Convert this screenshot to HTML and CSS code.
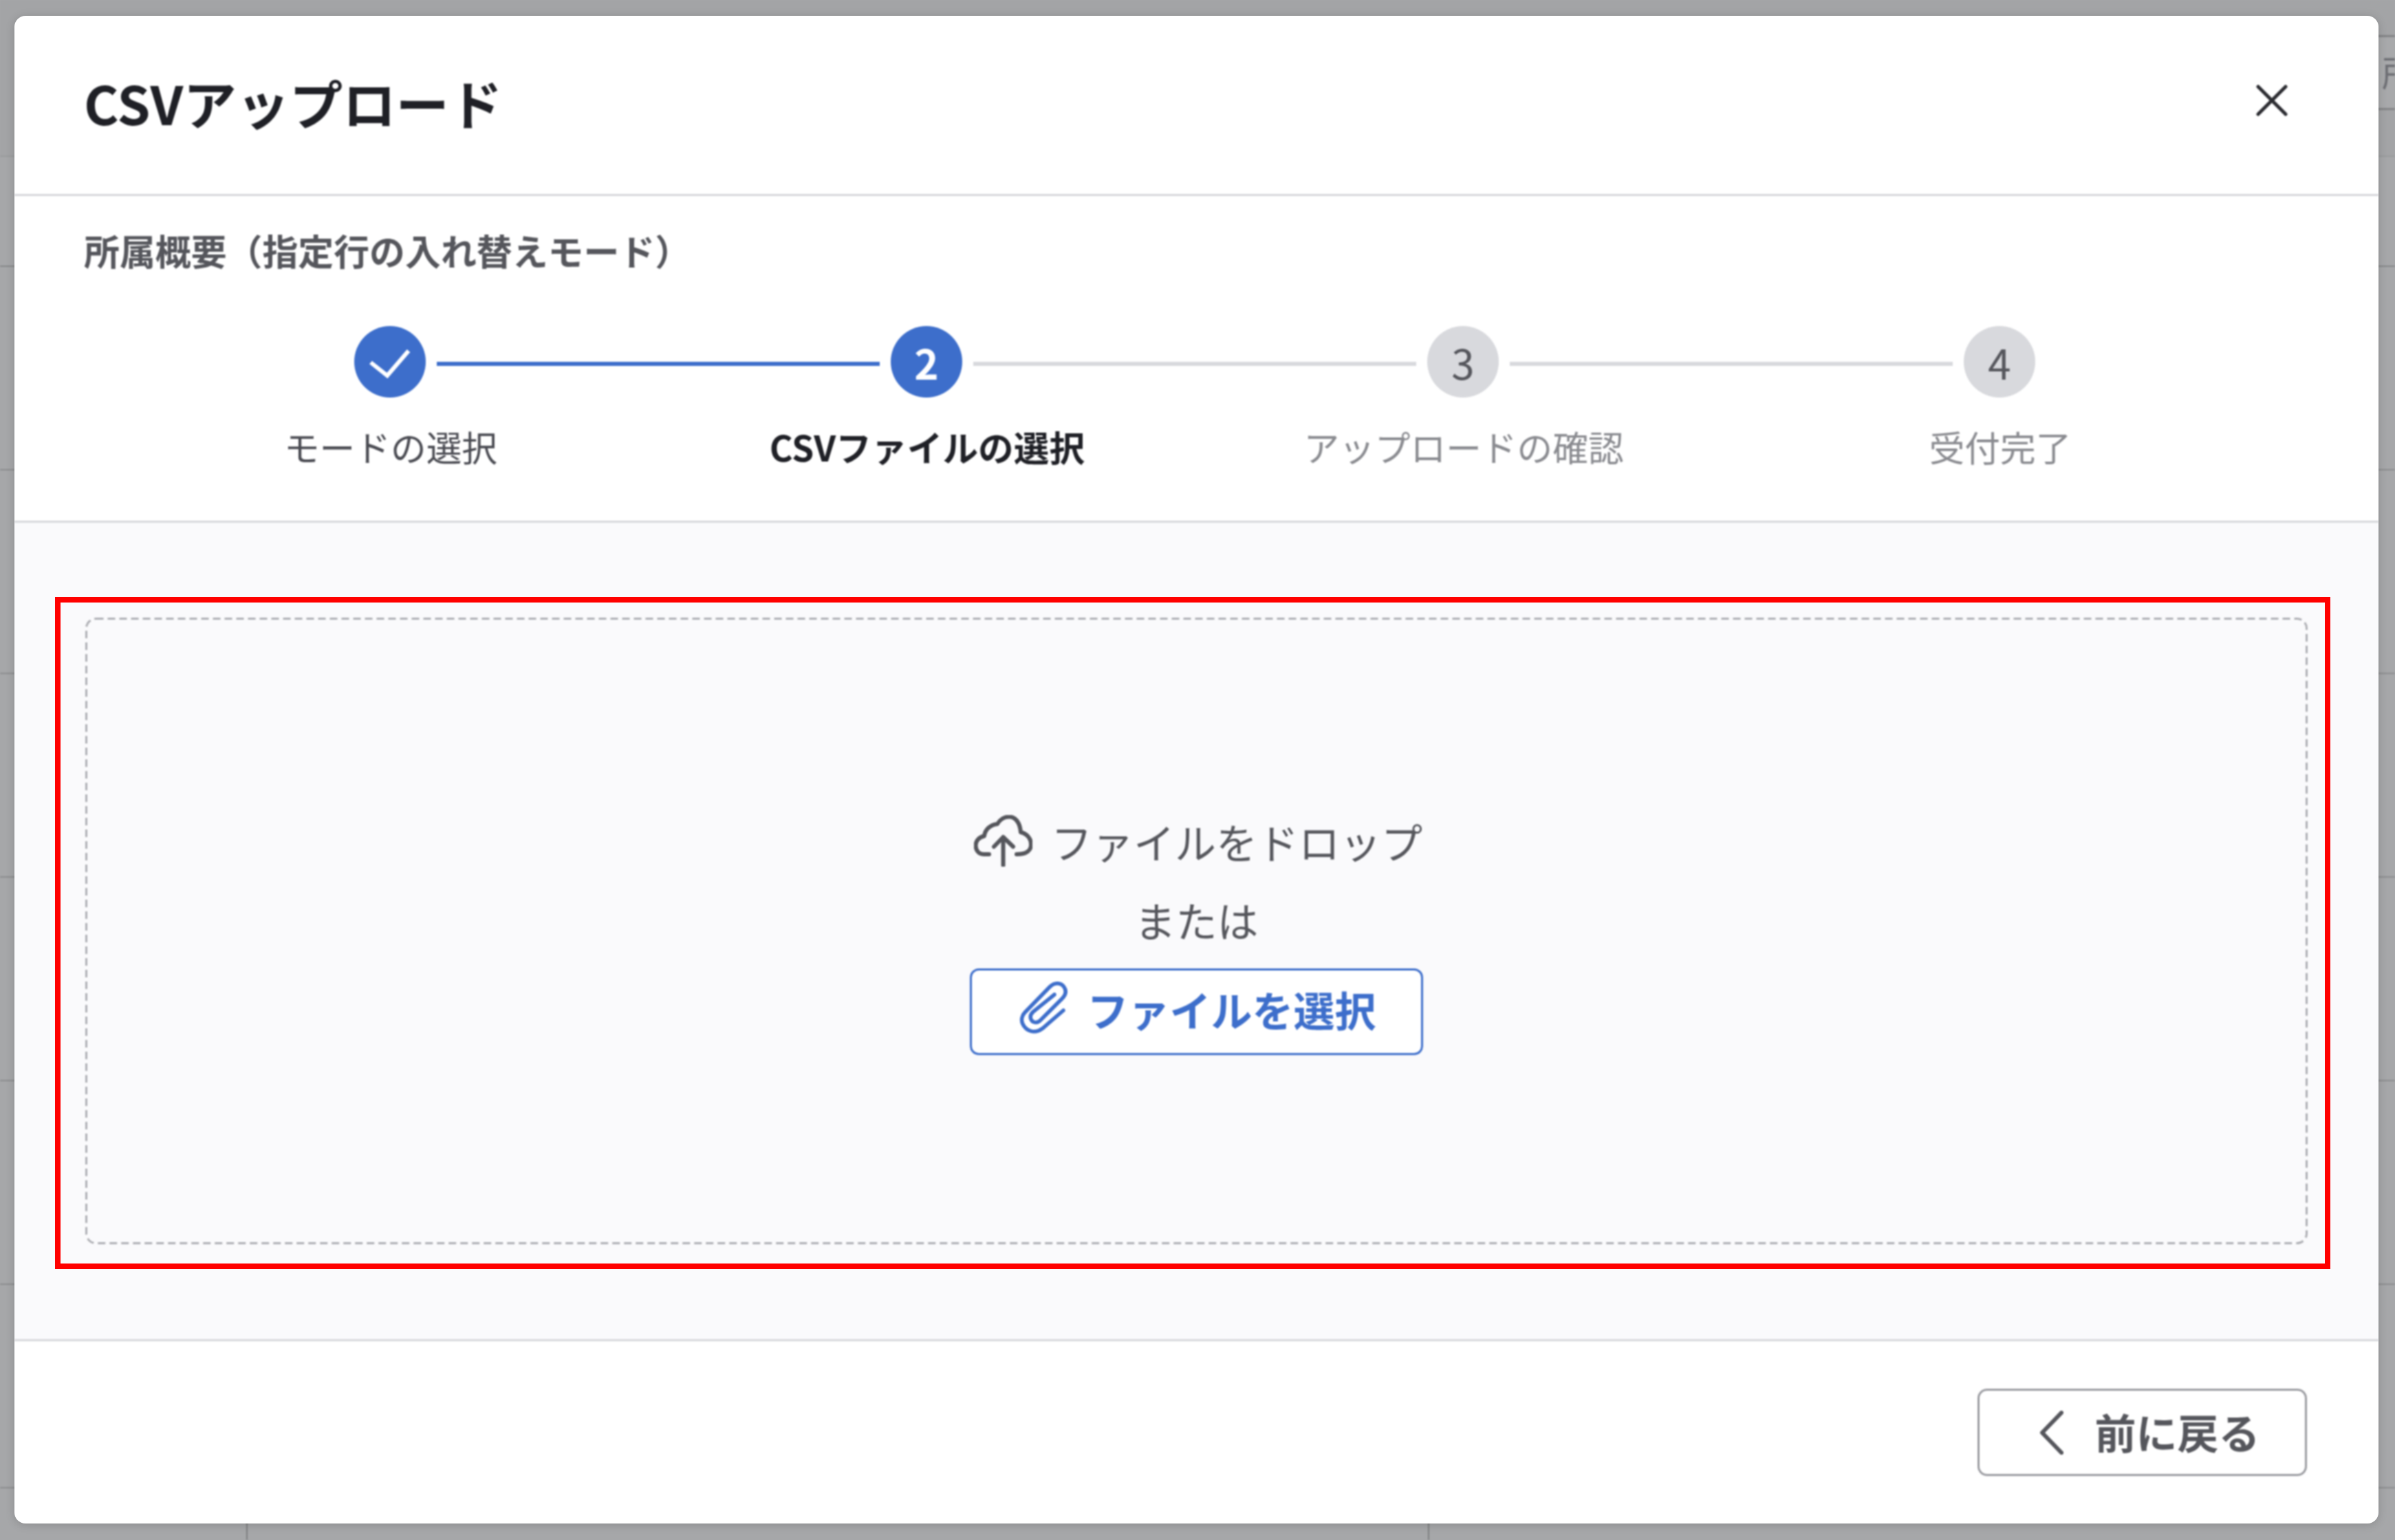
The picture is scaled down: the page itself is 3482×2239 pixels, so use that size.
FILE: index.html
```html
<!DOCTYPE html>
<html lang="ja">
  <head>
    <meta charset="utf-8">
    <title>CSVアップロード</title>
    <link rel="stylesheet" href="styles.css">
  </head>
  <body>
    <!-- table behind the dialog, only its edges show -->
    <div class="backdrop">
      <div class="bg-head">
        <div class="bg-head-cell">所属</div>
      </div>
      <div class="bg-first"></div>
      <div class="bg-row"></div>
      <div class="bg-row"></div>
      <div class="bg-row"></div>
      <div class="bg-row"></div>
      <div class="bg-row"></div>
      <div class="bg-row"></div>
      <div class="bg-last">
        <div class="bg-cell-a"></div>
        <div class="bg-cell-b"></div>
      </div>
    </div>

    <div class="modal">
      <div class="modal-header">
        <h1 class="modal-title">CSVアップロード</h1>
        <svg class="close-icon" width="46" height="46" viewBox="0 0 46 46">
          <path d="M3 3L43 43M43 3L3 43"/>
        </svg>
      </div>

      <div class="modal-steps">
        <p class="steps-caption">所属概要（指定行の入れ替えモード）</p>
        <div class="stepper">
          <div class="step done">
            <div class="step-top">
              <span class="line none"></span>
              <span class="circle">
                <svg width="104" height="104" viewBox="0 0 104 104">
                  <path d="M24 53L48 72L79 36"/>
                </svg>
              </span>
              <span class="line blue"></span>
            </div>
            <div class="step-label">モードの選択</div>
          </div>
          <div class="step current">
            <div class="step-top">
              <span class="line blue"></span>
              <span class="circle">2</span>
              <span class="line"></span>
            </div>
            <div class="step-label">CSVファイルの選択</div>
          </div>
          <div class="step">
            <div class="step-top">
              <span class="line"></span>
              <span class="circle">3</span>
              <span class="line"></span>
            </div>
            <div class="step-label">アップロードの確認</div>
          </div>
          <div class="step">
            <div class="step-top">
              <span class="line"></span>
              <span class="circle">4</span>
              <span class="line none"></span>
            </div>
            <div class="step-label">受付完了</div>
          </div>
        </div>
      </div>

      <div class="modal-body">
        <div class="red-frame">
          <div class="dropzone">
            <svg class="dash" width="3231" height="911" viewBox="0 0 3231 911">
              <rect x="1.5" y="1.5" width="3228" height="908" rx="14"/>
            </svg>
            <div class="drop-row">
              <svg class="cloud-icon" width="85" height="75" viewBox="0 0 85 75">
                <path d="M22 57H14C6 57 2.5 50 2.5 44C2.5 37 8 32 15 30.5C16 21 24 14 34 13C38 6 45 2.5 51 2.5C61 2.5 67 12 68 25C77 27 83 34 83 43C83 51 77 57 62 57"/>
                <path d="M42.5 73V32M29 46L42.5 32L57 46"/>
              </svg>
              <span>ファイルをドロップ</span>
            </div>
            <div class="drop-or">または</div>
            <button class="file-button">
              <svg class="clip-icon" width="110" height="110" viewBox="0 0 110 110">
                <path d="M75 53L45 79C33 88 21 83 16 73C13 67 15 60 19 56L55 19C62 12 71 12 76 19C80 25 78 31 73 36L41 68C36 72 30 71 28 66C26 62 28 58 31 55L62 30"/>
              </svg>
              <span class="file-button-text">ファイルを選択</span>
            </button>
          </div>
        </div>
      </div>

      <div class="modal-footer">
        <button class="back-button">
          <svg class="back-icon" width="36" height="64" viewBox="0 0 36 64">
            <path d="M33 3L5 32L33 61"/>
          </svg>
          <span class="back-button-text">前に戻る</span>
        </button>
      </div>
    </div>
  </body>
</html>
```

FILE: styles.css
```css
html, body {
  margin: 0;
  height: 2239px;
  overflow: hidden;
  background-color: #a6a7a9;
}
body {
  font-family: "Noto Sans CJK JP", "Noto Sans", sans-serif;
  position: relative;
  color: #55565c;
}
svg {
  display: block;
  fill: none;
}

/* the source is an enlarged capture, everything but the red frame is soft */
.backdrop,
.modal-header,
.modal-steps,
.dropzone,
.modal-footer {
  filter: blur(0.9px);
}

/* page behind the modal */
.backdrop {
  display: flex;
  flex-direction: column;
  height: 2239px;
}
.bg-head {
  height: 228px;
  flex: none;
  box-sizing: border-box;
  border-bottom: 2px solid #9a9b9d;
  background-color: #a3a4a6;
  display: flex;
  justify-content: flex-end;
  align-items: flex-start;
}
.bg-head-cell {
  width: 100px;
  height: 109px;
  margin-top: 51px;
  box-sizing: border-box;
  padding-left: 81px;
  border-top: 3px solid #838486;
  border-bottom: 3px solid #838486;
  background-color: #a8a9ab;
  color: #6e6f74;
  font-size: 52px;
  line-height: 100px;
  white-space: nowrap;
  overflow: hidden;
}
.bg-first {
  height: 160px;
  flex: none;
  box-sizing: border-box;
  border-bottom: 2px solid #88898b;
}
.bg-row {
  height: 296px;
  flex: none;
  box-sizing: border-box;
  border-bottom: 2px solid #8d8e90;
}
.bg-last {
  flex: 1;
  display: flex;
}
.bg-cell-a {
  width: 360px;
  box-sizing: border-box;
  border-right: 2px solid #7f8082;
}
.bg-cell-b {
  width: 1718px;
  box-sizing: border-box;
  border-right: 2px solid #7f8082;
}

/* modal */
.modal {
  position: absolute;
  left: 21px;
  top: 23px;
  width: 3437px;
  height: 2192px;
  display: flex;
  flex-direction: column;
  background-color: white;
  border-radius: 16px;
  box-shadow: 0 2px 14px rgba(0, 0, 0, 0.16);
  overflow: hidden;
}
.modal-header {
  height: 262px;
  flex: none;
  box-sizing: border-box;
  padding: 0 132px 6px 101px;
  border-bottom: 3px solid #d6d7db;
  display: flex;
  align-items: center;
  justify-content: space-between;
}
.modal-title {
  margin: 0 0 4px;
  font-size: 77.3px;
  font-weight: 700;
  color: #1f2026;
}
.close-icon {
  margin-bottom: 8px;
  stroke: #2b2c31;
  stroke-width: 5;
  stroke-linecap: round;
}

/* stepper */
.modal-steps {
  height: 475px;
  flex: none;
  box-sizing: border-box;
  padding-top: 40px;
  border-bottom: 3px solid #d6d7db;
}
.steps-caption {
  margin: 0 0 71px 101px;
  font-size: 51.9px;
  font-weight: 700;
  line-height: 78px;
}
.stepper {
  display: grid;
  grid-template-columns: repeat(4, 780px);
  margin-left: 156px;
}
.step-top {
  display: flex;
  align-items: center;
  gap: 16px;
}
.line {
  flex: 1;
  height: 6px;
  margin-top: 6px;
  background-color: #d8d9dd;
}
.line.blue {
  background-color: #3d6ecb;
}
.line.none {
  background-color: transparent;
}
.circle {
  width: 104px;
  height: 104px;
  flex: none;
  border-radius: 50%;
  background-color: #d8d9dd;
  color: #55565c;
  font-size: 60px;
  line-height: 104px;
  text-align: center;
}
.done .circle,
.current .circle {
  background-color: #3d6ecb;
  color: white;
}
.current .circle {
  font-weight: 700;
}
.done .circle path {
  stroke: white;
  stroke-width: 6;
}
.step-label {
  margin-top: 32px;
  padding-left: 2px;
  font-size: 51.7px;
  line-height: 78px;
  text-align: center;
  color: #8a8b90;
}
.done .step-label {
  color: #4a4b52;
}
.current .step-label {
  color: #1f2026;
  font-weight: 700;
}

/* drop area */
.modal-body {
  flex: 1;
  box-sizing: border-box;
  padding: 108px 70px 0 59px;
  background-color: #fafafc;
}
.red-frame {
  height: 977px;
  box-sizing: border-box;
  padding: 22px 25px 28px 36px;
  border: 8px solid red;
}
.dropzone {
  position: relative;
  height: 100%;
  box-sizing: border-box;
  padding-top: 4px;
  display: flex;
  flex-direction: column;
  align-items: center;
  justify-content: center;
  gap: 24px;
  font-size: 60px;
  line-height: 90px;
}
.dash {
  position: absolute;
  left: 0;
  top: 0;
}
.dash rect {
  stroke: #aeafb4;
  stroke-width: 3;
  stroke-dasharray: 11 6;
}
.drop-row {
  display: flex;
  align-items: center;
  gap: 27px;
  padding-left: 5px;
}
.cloud-icon path {
  stroke: #55565c;
  stroke-width: 6;
  stroke-linecap: round;
  stroke-linejoin: round;
}
button {
  font-family: inherit;
  font-weight: 700;
  background-color: white;
  display: flex;
  align-items: center;
  justify-content: center;
  padding: 0;
}
.file-button {
  width: 659px;
  height: 126px;
  margin-top: 2px;
  padding-right: 8px;
  border: 3px solid #3d6ecb;
  border-radius: 13px;
  color: #3d6ecb;
  font-size: 60px;
}
.file-button-text {
  margin-bottom: 8px;
}
.clip-icon path {
  stroke: #3d6ecb;
  stroke-width: 5.5;
  stroke-linecap: round;
}

/* footer */
.modal-footer {
  flex: none;
  height: 268px;
  box-sizing: border-box;
  padding-right: 104px;
  border-top: 3px solid #d6d7db;
  display: flex;
  align-items: center;
  justify-content: flex-end;
}
.back-button {
  width: 479px;
  height: 127px;
  gap: 46px;
  padding-left: 20px;
  border: 3px solid #9b9ca1;
  border-radius: 14px;
  color: #55565c;
  font-size: 60px;
}
.back-button-text {
  margin-bottom: 4px;
}
.back-icon path {
  stroke: #55565c;
  stroke-width: 6;
  stroke-linecap: round;
  stroke-linejoin: round;
}
```
